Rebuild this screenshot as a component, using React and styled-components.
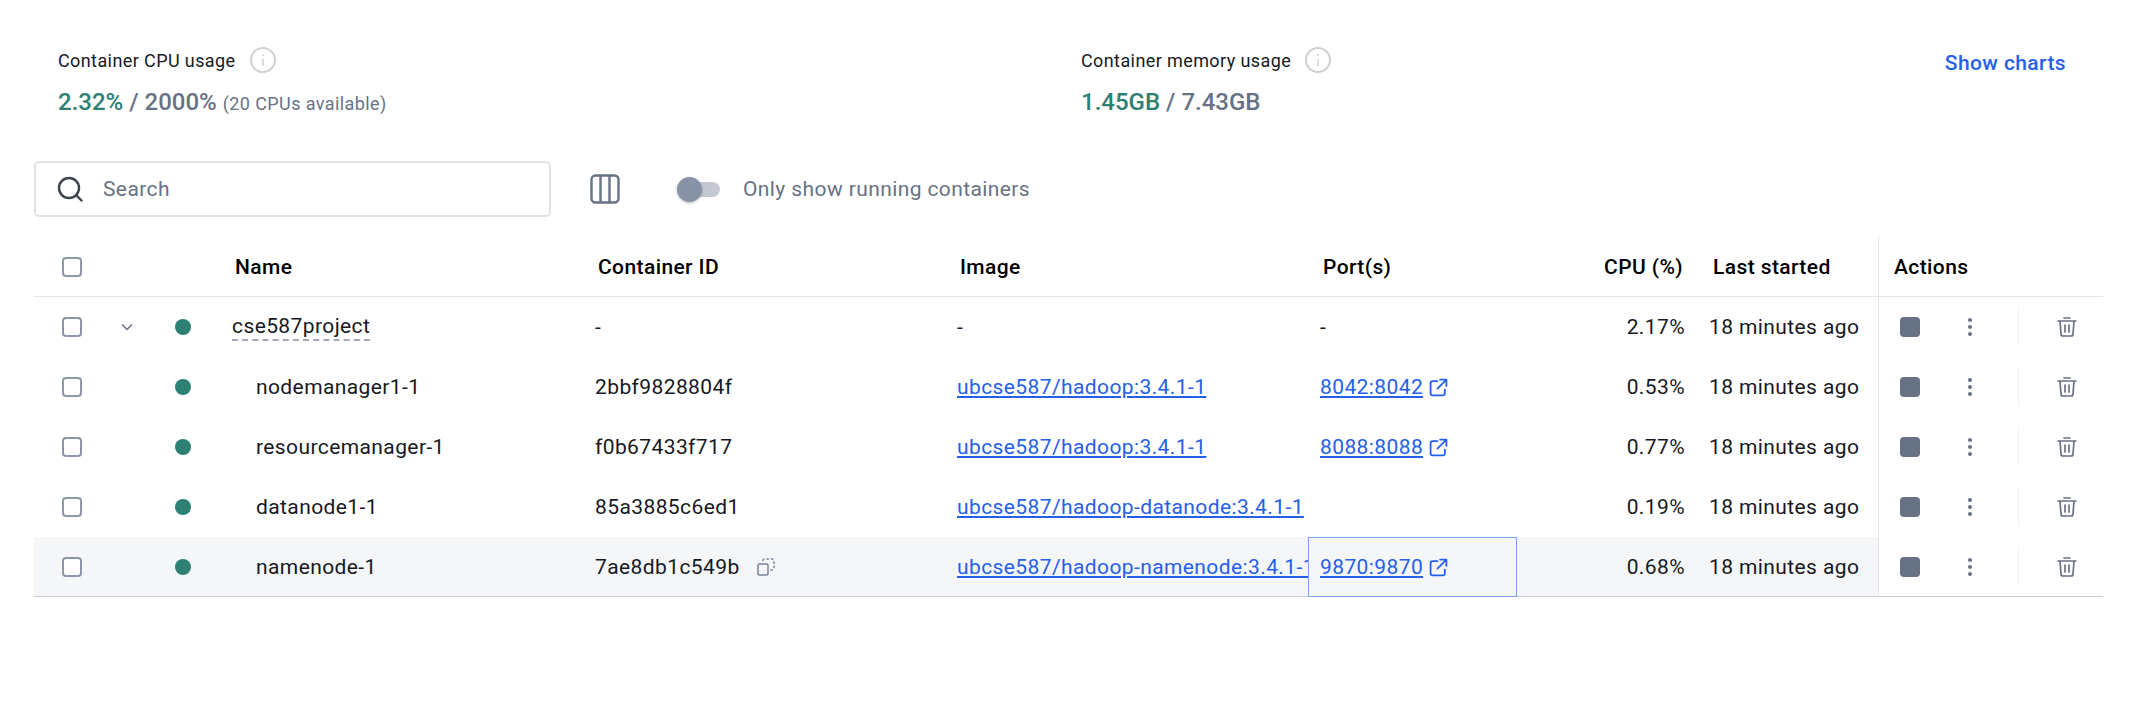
import styled, { createGlobalStyle } from 'styled-components'

const Global = createGlobalStyle`
  html, body {
    margin: 0;
    background: #fff;
    font-family: Roboto, "Liberation Sans", sans-serif;
    color: #17191e;
  }
  * { box-sizing: border-box; }
`

const Page = styled.div`
  width: 2145px;
  height: 704px;
  padding: 47px 42px 0 34px;
  overflow: hidden;
`

const Stats = styled.section`
  display: flex;
  height: 114px;
  padding-left: 24px;
`

const Stat = styled.div`
  width: ${p => p.$width}px;
`

const StatLabel = styled.div`
  display: flex;
  align-items: center;
  gap: 14px;
  height: 26px;
  font-size: 18px;
  letter-spacing: 0.4px;
  color: #17191e;
`

const StatValue = styled.div`
  margin-top: 15px;
  font-size: 24px;
  font-weight: 500;
  line-height: 28px;
  color: #677285;
`

const Used = styled.span`
  color: #2e7f74;
`

const Note = styled.span`
  font-size: 18px;
  font-weight: 400;
  letter-spacing: 0.4px;
`

const ChartsLink = styled.a`
  margin: 3px 37px 0 auto;
  font-size: 21px;
  font-weight: 500;
  line-height: 26px;
  letter-spacing: 0.4px;
  color: #2560e8;
`

const Toolbar = styled.div`
  display: flex;
  align-items: center;
  height: 56px;
`

const SearchBox = styled.div`
  display: flex;
  align-items: center;
  gap: 20px;
  width: 517px;
  height: 56px;
  padding-left: 21px;
  border: 2px solid #e1e2e6;
  border-radius: 5px;
  font-size: 21px;
  letter-spacing: 0.4px;
  color: #677285;
`

const ColumnsButton = styled.div`
  display: flex;
  margin-left: 39px;
`

const SwitchTrack = styled.div`
  position: relative;
  width: 43px;
  height: 15px;
  margin-left: 57px;
  border-radius: 8px;
  background: #c4c8d2;
`

const SwitchThumb = styled.div`
  position: absolute;
  left: 0;
  top: -5px;
  width: 25px;
  height: 25px;
  border-radius: 50%;
  background: #8892a6;
  box-shadow: 0 1px 3px rgb(0 0 0 / 0.25);
`

const SwitchLabel = styled.span`
  margin-left: 23px;
  font-size: 21px;
  letter-spacing: 0.4px;
  color: #677285;
`

const Table = styled.div`
  margin-top: 20px;
  width: 2069px;
`

const Row = styled.div`
  display: grid;
  grid-template-columns: 66px 54px 66px 363px 362px 363px 209px 180px 181px 225px;
  height: 60px;
  background: ${p => (p.$active ? '#f5f6f8' : '#fff')};
  box-shadow: ${p => (p.$active ? 'inset 0 -1px 0 #c9ced6' : 'none')};
`

const HeaderRow = styled(Row)`
  box-shadow: inset 0 -1px 0 #e3e5e9;
  font-weight: 500;
`

const Cell = styled.div`
  display: flex;
  align-items: center;
  justify-content: ${p => (p.$end ? 'flex-end' : 'flex-start')};
  min-width: 0;
  padding: 0 ${p => (p.$end ? '12px' : '0')} 0 ${p => p.$indent || 12}px;
  font-size: 21px;
  letter-spacing: 0.4px;
  white-space: nowrap;
  overflow: hidden;
`

const HeadCell = styled(Cell)`
  padding: 0 ${p => (p.$end ? '14px' : '0')} 0 ${p => p.$lead || 15}px;
  color: #000;
`

const IconCell = styled.div`
  display: flex;
  align-items: center;
  justify-content: center;
`

const CheckCell = styled(IconCell)`
  justify-content: flex-start;
  padding-left: 28px;
`

const DotCell = styled(IconCell)`
  padding-right: 8px;
`

const Checkbox = styled.span`
  display: block;
  width: 20px;
  height: 20px;
  border: 2px solid #8d96a8;
  border-radius: 4px;
  background: #fff;
`

const Dot = styled.span`
  width: 16px;
  height: 16px;
  border-radius: 50%;
  background: #2e7f74;
`

const Project = styled.span`
  border-bottom: 2px dashed #a3abba;
  line-height: 25px;
`

const Link = styled.a`
  color: #2560e8;
  text-decoration: underline;
  text-underline-offset: 2px;
`

const PortCell = styled(Cell)`
  gap: 6px;
  outline: ${p => (p.$focused ? '1px solid #7ba3ef' : 'none')};
  outline-offset: -1px;
`

const CopyIcon = styled.svg`
  flex: none;
  margin-left: 17px;
  color: #7a8496;
`

const ActionsHead = styled(HeadCell)`
  border-left: 1px solid #e3e5e9;
`

const Actions = styled.div`
  display: flex;
  align-items: center;
  padding-left: 21px;
  border-left: 1px solid #e3e5e9;
  box-shadow: inset 0 -1px 0 ${p => (p.$active ? '#c9ced6' : 'transparent')};
  background: #fff;
`

const StopButton = styled.span`
  width: 20px;
  height: 20px;
  border-radius: 4px;
  background: #677285;
`

const MenuIcon = styled.svg`
  margin-left: 47px;
  color: #677285;
`

const Separator = styled.span`
  width: 1px;
  height: 36px;
  margin-left: 45px;
  background: #eef0f2;
`

const TrashIcon = styled.svg`
  margin-left: 38px;
  color: #677285;
`

const Info = () => (
  <svg width="26" height="26" viewBox="0 0 26 26" fill="none" stroke="#cfd0d2" strokeWidth="2">
    <circle cx="13" cy="13" r="12" />
    <path d="M13 12v7M13 7v2" strokeWidth="1.5" />
  </svg>
)

const Opener = () => (
  <svg width="19" height="19" viewBox="0 0 18 18" fill="none" stroke="#2560e8" strokeWidth="1.7" strokeLinecap="round" strokeLinejoin="round">
    <path d="M8 3H3.5A2 2 0 0 0 1.500 5v9.500a2 2 0 0 0 2 2H13a2 2 0 0 0 2-2V11" />
    <path d="M10.500 1.500h6v6M16.500 1.500 8 10" />
  </svg>
)

const rows = [
  { name: 'nodemanager1-1', id: '2bbf9828804f', image: 'ubcse587/hadoop:3.4.1-1', port: '8042:8042', cpu: '0.53%' },
  { name: 'resourcemanager-1', id: 'f0b67433f717', image: 'ubcse587/hadoop:3.4.1-1', port: '8088:8088', cpu: '0.77%' },
  { name: 'datanode1-1', id: '85a3885c6ed1', image: 'ubcse587/hadoop-datanode:3.4.1-1', cpu: '0.19%' },
  { name: 'namenode-1', id: '7ae8db1c549b', image: 'ubcse587/hadoop-namenode:3.4.1-1', port: '9870:9870', cpu: '0.68%', active: true },
]

const RowActions = ({ active }) => (
  <Actions $active={active}>
    <StopButton />
    <MenuIcon width="6" height="20" viewBox="0 0 6 20" fill="currentColor">
      <circle cx="3" cy="3" r="2" />
      <circle cx="3" cy="10" r="2" />
      <circle cx="3" cy="17" r="2" />
    </MenuIcon>
    <Separator />
    <TrashIcon width="20" height="20" viewBox="0 0 20 20" fill="none" stroke="currentColor" strokeWidth="1.7" strokeLinecap="round" strokeLinejoin="round">
      <path d="M1 4h18M7 1h6M3 4l1 13a2 2 0 0 0 2 2h8a2 2 0 0 0 2-2l1-13M8 8v7M12 8v7" />
    </TrashIcon>
  </Actions>
)

export default function App() {
  return (
    <Page>
      <Global />
      <Stats>
        <Stat $width={1023}>
          <StatLabel>Container CPU usage <Info /></StatLabel>
          <StatValue><Used>2.32%</Used> / 2000% <Note>(20 CPUs available)</Note></StatValue>
        </Stat>
        <Stat $width={600}>
          <StatLabel>Container memory usage <Info /></StatLabel>
          <StatValue><Used>1.45GB</Used> / 7.43GB</StatValue>
        </Stat>
        <ChartsLink>Show charts</ChartsLink>
      </Stats>
      <Toolbar>
        <SearchBox>
          <svg width="26" height="26" viewBox="0 0 26 26" fill="none" stroke="#3d4350" strokeWidth="2.4" strokeLinecap="round">
            <circle cx="12" cy="12" r="10" />
            <path d="m19.500 19.500 5 5" />
          </svg>
          Search
        </SearchBox>
        <ColumnsButton>
          <svg width="30" height="30" viewBox="0 0 30 30" fill="none" stroke="#677285" strokeWidth="2.400">
            <rect x="1.500" y="1.500" width="27" height="27" rx="4" />
            <path d="M10.500 2v26M19.500 2v26" />
          </svg>
        </ColumnsButton>
        <SwitchTrack><SwitchThumb /></SwitchTrack>
        <SwitchLabel>Only show running containers</SwitchLabel>
      </Toolbar>
      <Table>
        <HeaderRow>
          <CheckCell><Checkbox /></CheckCell>
          <span />
          <span />
          <HeadCell>Name</HeadCell>
          <HeadCell>Container ID</HeadCell>
          <HeadCell>Image</HeadCell>
          <HeadCell>Port(s)</HeadCell>
          <HeadCell $end>CPU (%)</HeadCell>
          <HeadCell $lead={16}>Last started</HeadCell>
          <ActionsHead>Actions</ActionsHead>
        </HeaderRow>
        <Row>
          <CheckCell><Checkbox /></CheckCell>
          <IconCell>
            <svg width="14" height="14" viewBox="0 0 14 14" fill="none" stroke="#677285" strokeWidth="1.500">
              <path d="m2 4.500 5 5 5-5" />
            </svg>
          </IconCell>
          <DotCell><Dot /></DotCell>
          <Cell><Project>cse587project</Project></Cell>
          <Cell>-</Cell>
          <Cell>-</Cell>
          <Cell>-</Cell>
          <Cell $end>2.17%</Cell>
          <Cell>18 minutes ago</Cell>
          <RowActions />
        </Row>
        {rows.map(r => (
          <Row key={r.name} $active={r.active}>
            <CheckCell><Checkbox /></CheckCell>
            <span />
            <DotCell><Dot /></DotCell>
            <Cell $indent={36}>{r.name}</Cell>
            <Cell>
              {r.id}
              {r.active && (
                <CopyIcon width="18" height="18" viewBox="0 0 18 18" fill="none" stroke="currentColor" strokeWidth="1.500">
                  <rect x="1" y="6" width="10" height="11" rx="1.500" />
                  <path d="M6 3V2.500A1.500 1.500 0 0 1 7.500 1h8A1.500 1.500 0 0 1 17 2.500v8a1.500 1.500 0 0 1-1.500 1.500H13" strokeDasharray="2.500 2" />
                </CopyIcon>
              )}
            </Cell>
            <Cell><Link>{r.image}</Link></Cell>
            <PortCell $focused={r.active}>
              {r.port && <><Link>{r.port}</Link><Opener /></>}
            </PortCell>
            <Cell $end>{r.cpu}</Cell>
            <Cell>18 minutes ago</Cell>
            <RowActions active={r.active} />
          </Row>
        ))}
      </Table>
    </Page>
  )
}
